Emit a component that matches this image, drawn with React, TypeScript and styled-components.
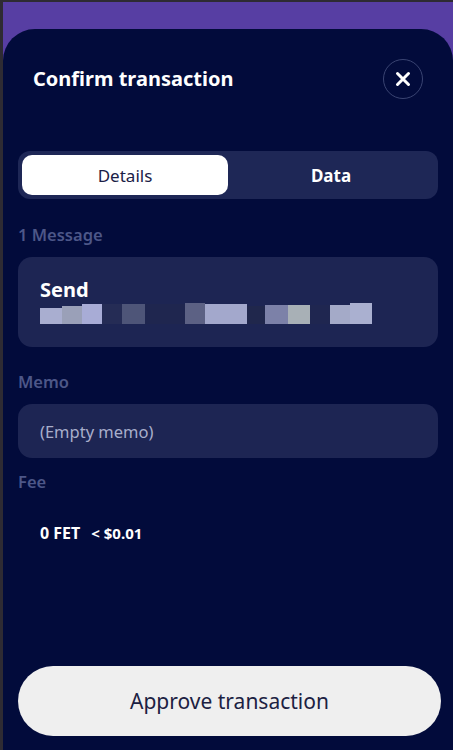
import React from "react";
import styled, { createGlobalStyle } from "styled-components";

const Global = createGlobalStyle`
  html, body { margin: 0; padding: 0; height: 100%; }
  body { background: #2e2b33; font-family: "Noto Sans", "Open Sans", sans-serif; }
  #root { height: 100%; }
  * { box-sizing: border-box; }
`;

const Page = styled.div`
  height: 750px;
  padding: 2px 0 0 3px;
  display: flex;
`;

const Backdrop = styled.div`
  flex: 1;
  background: #573ea3;
  padding-top: 27px;
  display: flex;
`;

const Sheet = styled.div`
  flex: 1;
  background: #020b3b;
  border-radius: 32px 32px 0 0;
  display: flex;
  flex-direction: column;
  padding: 0 12px 14px 15px;
`;

const Header = styled.div`
  display: flex;
  align-items: center;
  justify-content: space-between;
  height: 99px;
  padding: 0 18px 0 15px;
`;

const Title = styled.h1`
  margin: 0;
  font-size: 20px;
  font-weight: 700;
  color: #ffffff;
`;

const CloseButton = styled.button`
  width: 40px;
  height: 40px;
  border-radius: 50%;
  border: 1px solid #3a4472;
  background: transparent;
  display: flex;
  align-items: center;
  justify-content: center;
  padding: 0;
`;

const Tabs = styled.div`
  margin-top: 23px;
  height: 48px;
  background: #1e2756;
  border-radius: 12px;
  padding: 4px;
  display: grid;
  grid-template-columns: 1fr 1fr;
  margin-right: 3px;
`;

const Tab = styled.div<{ $active?: boolean }>`
  display: flex;
  align-items: center;
  justify-content: center;
  border-radius: 10px;
  font-size: 17px;
  font-weight: ${(p) => (p.$active ? 400 : 700)};
  background: ${(p) => (p.$active ? "#ffffff" : "transparent")};
  color: ${(p) => (p.$active ? "#1b2046" : "#ffffff")};
`;

const Label = styled.div<{ $top: number }>`
  margin-top: ${(p) => p.$top}px;
  font-size: 16.5px;
  font-weight: 600;
  color: #4d5788;
  line-height: 20px;
`;

const Card = styled.div<{ $height: number }>`
  margin-top: 12px;
  margin-right: 3px;
  height: ${(p) => p.$height}px;
  background: #1d2553;
  border-radius: 14px;
  padding: 0 22px;
  display: flex;
  flex-direction: column;
  justify-content: center;
`;

const MsgType = styled.div`
  font-size: 20px;
  font-weight: 700;
  color: #ffffff;
  line-height: 22px;
`;

const Masked = styled.svg`
  display: block;
  margin-top: 2px;
`;

const MemoText = styled.div`
  font-size: 16.5px;
  color: #a8aecb;
`;

const FeeRow = styled.div`
  margin-top: 30px;
  padding-left: 22px;
  display: flex;
  gap: 11px;
  align-items: baseline;
  color: #ffffff;
  font-weight: 700;
`;

const FeeAmount = styled.span`
  font-size: 16px;
`;

const FeeUsd = styled.span`
  font-size: 15px;
`;

const Approve = styled.button`
  margin-top: auto;
  height: 70px;
  border: none;
  border-radius: 35px;
  background: #efefef;
  color: #1c2142;
  font-family: inherit;
  font-size: 21px;
  font-weight: 400;
`;

const blocks: [number, number, number, string][] = [
  [0, 22, 5, "#a9aed0"],
  [22, 20, 3, "#9aa0b8"],
  [42, 20, 1, "#a8acd6"],
  [62, 20, 1, "#252c55"],
  [82, 23, 1, "#4e5578"],
  [105, 40, 1, "#1f264f"],
  [145, 20, 0, "#5c6184"],
  [165, 42, 1, "#a3a8cc"],
  [207, 18, 3, "#20274c"],
  [225, 23, 2, "#7c81a8"],
  [248, 22, 2, "#a8b0b6"],
  [270, 20, 2, "#1f2650"],
  [290, 20, 2, "#a4aac8"],
  [310, 22, 0, "#aab0d0"],
];

export default function App() {
  return (
    <>
      <Global />
      <Page>
        <Backdrop>
          <Sheet>
            <Header>
              <Title>Confirm transaction</Title>
              <CloseButton aria-label="Close">
                <svg width="16" height="16" viewBox="0 0 16 16">
                  <path d="M2.5 2.5 L13.5 13.5 M13.5 2.5 L2.5 13.5" stroke="#fff" strokeWidth="3" strokeLinecap="round" />
                </svg>
              </CloseButton>
            </Header>
            <Tabs>
              <Tab $active>Details</Tab>
              <Tab>Data</Tab>
            </Tabs>
            <Label $top={26}>1 Message</Label>
            <Card $height={90}>
              <MsgType>Send</MsgType>
              <Masked width="332" height="22" viewBox="0 0 332 22">
                {blocks.map(([x, w, y, c], i) => (
                  <rect key={i} x={x} y={y} width={w} height={21 - y} fill={c} />
                ))}
              </Masked>
            </Card>
            <Label $top={25}>Memo</Label>
            <Card $height={54}>
              <MemoText>(Empty memo)</MemoText>
            </Card>
            <Label $top={14}>Fee</Label>
            <FeeRow>
              <FeeAmount>0 FET</FeeAmount>
              <FeeUsd>&lt; $0.01</FeeUsd>
            </FeeRow>
            <Approve>Approve transaction</Approve>
          </Sheet>
        </Backdrop>
      </Page>
    </>
  );
}
